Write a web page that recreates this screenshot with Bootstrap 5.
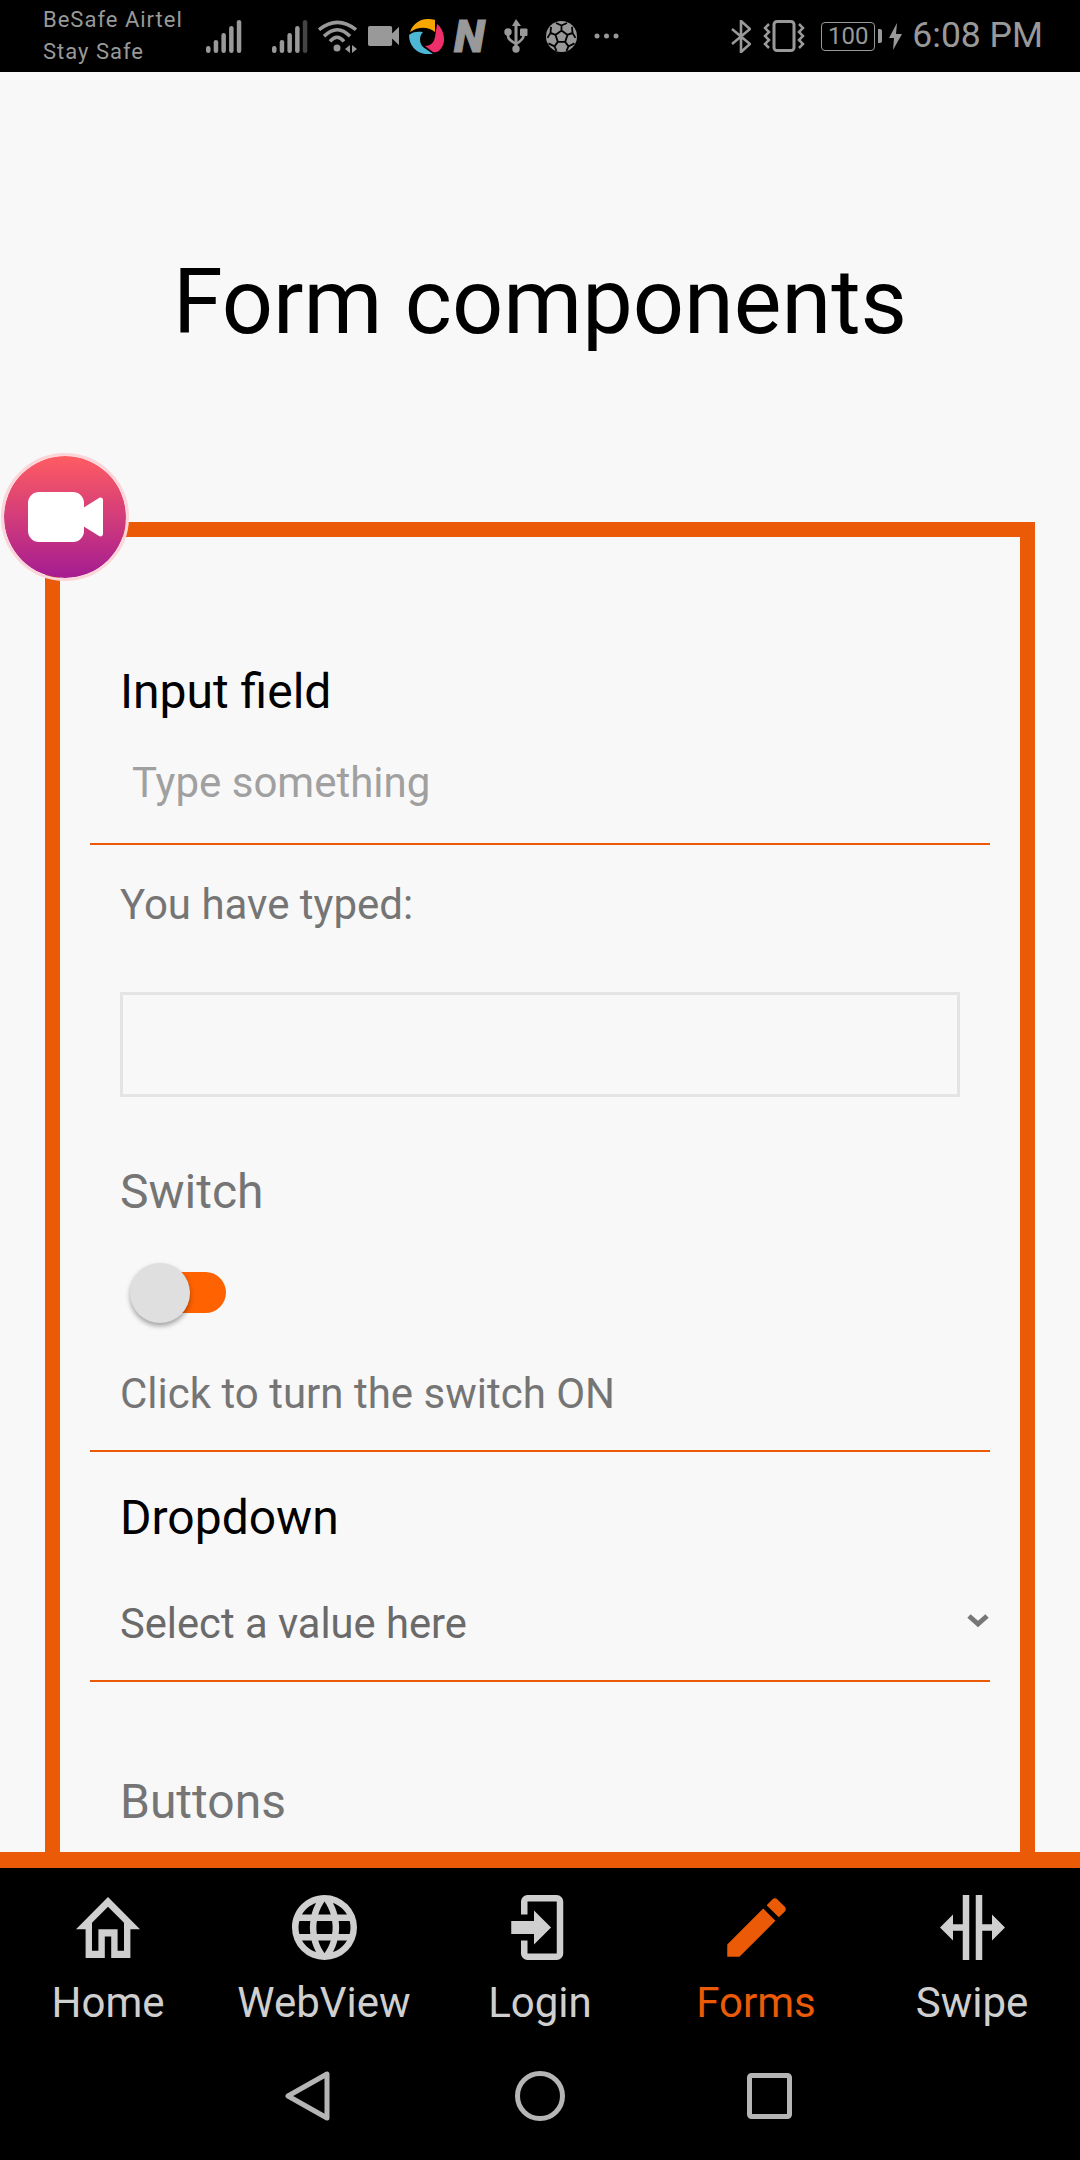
<!DOCTYPE html>
<html lang="en">
<head>
  <meta charset="UTF-8" />
  <meta name="viewport" content="width=device-width, initial-scale=1" />
  <title>Form components</title>
  <link href="https://cdn.jsdelivr.net/npm/bootstrap@5.3.3/dist/css/bootstrap.min.css" rel="stylesheet" />
  <style>
    body {
      background-color: #f8f8f8;
      font-family: Roboto, "Liberation Sans", sans-serif;
    }
    .app-shell {
      height: 2160px;
      overflow: hidden;
    }
    .status-bar {
      height: 72px;
      background: #000;
      color: #999;
      padding-left: 43px;
      padding-right: 37px;
      flex: none;
    }
    .carrier {
      width: 163px;
      font-size: 22px;
      line-height: 32px;
      letter-spacing: 1px;
      margin-top: -1px;
    }
    .status-bar svg { display: block; fill: #999; flex: none; }
    .gap-signal { margin-left: 30px; }
    .gap-wifi { margin-left: 10px; }
    .gap-video { margin-left: 11px; }
    .gap-logo { margin-left: 10px; }
    .gap-usb { margin-left: 14px; }
    .gap-ball { margin-left: 18px; }
    .gap-dots { margin-left: 17px; }
    .gap-vibrate { margin-left: 12px; }
    .gap-bolt { margin-left: 7px; }
    .n-glyph {
      font-size: 45px;
      font-weight: 900;
      font-style: italic;
      line-height: 1;
      width: 36px;
      margin-left: 9px;
      -webkit-text-stroke: 1px #999;
    }
    .batt-box {
      width: 54px;
      height: 29px;
      border: 1.5px solid #999;
      border-radius: 4px;
      font-size: 24px;
      line-height: 26px;
      text-align: center;
    }
    .batt-nub { width: 4px; height: 14px; background: #999; border-radius: 0 2px 2px 0; margin-left: 3px; }
    .clock { font-size: 35.5px; line-height: 1; margin-left: 10px; }

    .main-area {
      flex: 1 1 auto;
      min-height: 0;
      overflow: hidden;
      position: relative;
    }
    .page-title {
      font-family: Roboto, sans-serif;
      font-size: 90px;
      font-weight: 400;
      color: #000;
      text-align: center;
      line-height: 106px;
      padding-top: 178px;
      margin-bottom: 0;
    }
    .frame-box {
      border: 15px solid #eb5a06;
      margin: 166px 45px 0;
      padding: 127px 30px 300px;
    }
    .field-title { font-size: 48px; line-height: 56px; color: #000; padding-left: 30px; margin-bottom: 0; }
    .field-title.muted-title { color: #757575; }
    .under-input.form-control {
      background: transparent;
      border: 0;
      border-bottom: 2px solid #eb5a06;
      border-radius: 0;
      box-shadow: none;
      font-size: 42px;
      line-height: 50px;
      height: 125px;
      padding: 37px 42px 36px;
      color: #757575;
    }
    .under-input.form-control::placeholder { color: #a0a0a0; opacity: 1; }
    .help-text { font-size: 42px; line-height: 48px; color: #757575; padding-left: 30px; margin-bottom: 0; }
    .typed-label { margin-top: 36px; }
    .typed-box {
      height: 105px;
      margin: 63px 30px 0;
      border: 3px solid #e4e4e4;
    }
    .switch-title { margin-top: 67px; }
    .toggle-wrap { width: 100px; height: 60px; margin: 43px 0 47px 40px; }
    .toggle-track {
      position: absolute;
      left: 20px;
      top: 9px;
      width: 76px;
      height: 41px;
      border-radius: 21px;
      background: #ff6200;
    }
    .toggle-knob {
      position: absolute;
      left: 0;
      top: 0;
      width: 60px;
      height: 60px;
      border-radius: 50%;
      background: #dfdfdf;
      box-shadow: 0 3px 5px rgba(0, 0, 0, .35);
    }
    .under-rule { border-bottom: 2px solid #eb5a06; padding-bottom: 32px; }
    .dropdown-title { margin-top: 38px; }
    .under-select.form-select {
      background-color: transparent;
      background-image: url("data:image/svg+xml,%3Csvg xmlns='http://www.w3.org/2000/svg' viewBox='0 0 24 15'%3E%3Cpath d='M3 3l9 8 9-8' fill='none' stroke='%23777' stroke-width='5'/%3E%3C/svg%3E");
      background-size: 24px 15px;
      background-position: right 0 top 67px;
      border: 0;
      border-bottom: 2px solid #eb5a06;
      border-radius: 0;
      box-shadow: none;
      font-size: 41.7px;
      line-height: 50px;
      height: 136px;
      padding: 53px 30px 31px;
      color: #6a6a6a;
    }
    .buttons-title { margin-top: 92px; }
    .rec-button {
      position: absolute;
      left: 1px;
      top: 381px;
      width: 128px;
      height: 128px;
      border-radius: 50%;
      border: 3px solid #fbd5d8;
      background: linear-gradient(#ff5c62, #a51c92);
      background-clip: padding-box;
    }

    .bottom-nav {
      flex: none;
      background: #000;
      border-top: 16px solid #eb5a06;
      height: 308px;
    }
    .tab-row { height: 179px; padding-top: 27px; }
    .tab-item {
      width: 20%;
      color: #cfcfcf;
      font-size: 42px;
      line-height: 49px;
    }
    .tab-item svg { fill: #cfcfcf; display: block; }
    .tab-item.active-tab { color: #eb5a06; }
    .tab-item.active-tab svg { fill: #eb5a06; }
    .tab-icon { height: 65px; margin-bottom: 18px; }
    .sys-row svg { display: block; fill: none; stroke: #b5b5b5; stroke-width: 5; stroke-linejoin: round; }
    .sys-row { padding-top: 24px; }
    .sys-back { margin-left: 285px; }
    .sys-home { margin-left: 185px; }
    .sys-recent { margin-left: 182px; }
  </style>
</head>
<body>

<div class="app-shell d-flex flex-column">

  <!-- status bar -->
  <div class="status-bar d-flex align-items-center">
    <div class="carrier">BeSafe Airtel<br>Stay Safe</div>
    <svg width="36" height="33" viewBox="0 0 36 33"><rect x="0" y="26" width="4.500" height="7" rx="2.250"/><rect x="7.700" y="20" width="4.500" height="13" rx="2.250"/><rect x="15.400" y="13" width="4.500" height="20" rx="2.250"/><rect x="23.100" y="6" width="4.500" height="27" rx="2.250"/><rect x="30.800" y="0" width="4.500" height="33" rx="2.250"/></svg>
    <svg class="gap-signal" width="36" height="33" viewBox="0 0 36 33"><rect x="0" y="26" width="4.500" height="7" rx="2.250"/><rect x="7.700" y="20" width="4.500" height="13" rx="2.250"/><rect x="15.400" y="13" width="4.500" height="20" rx="2.250"/><rect x="23.100" y="6" width="4.500" height="27" rx="2.250"/><rect x="30.800" y="0" width="4.500" height="33" rx="2.250" fill="#444"/></svg>
    <svg class="gap-wifi" width="39" height="33" viewBox="0 0 39 33"><path d="M1 9.700Q19.500-5 38 9.700M6 16.300Q19.500 3 32 16.300M12 21.300Q19 13 26 21.300" fill="none" stroke="#999" stroke-width="3.500"/><circle cx="19" cy="28" r="3.500"/><path d="M32 25v8l-5-4zM34 25v8l5-4z"/></svg>
    <svg class="gap-video" width="31" height="20" viewBox="3 6 18 12" preserveAspectRatio="none"><path d="M17,10.500V7A1,1 0 0,0 16,6H4A1,1 0 0,0 3,7V17A1,1 0 0,0 4,18H16A1,1 0 0,0 17,17V13.500L21,17.500V6.500L17,10.500Z"/></svg>
    <svg class="gap-logo" width="36" height="35" viewBox="0 0 36 35">
      <path d="M1 13C4 4 12 0 18 0c3 0 6 0 8 1v12C18 7 9 8 1 13z" fill="#f7a600"/>
      <path d="M0 16C3 13 8 12 14 13 10 17 10 24 14 28L24 35C12 37 0 30 0 16z" fill="#4db8d6"/>
      <path d="M28 5C35 10 37 22 33 28 30 33 27 34 24 33L16 27C21 27 25 24 26 18z" fill="#ee2f6c"/>
    </svg>
    <div class="n-glyph">N</div>
    <svg class="gap-usb" width="24" height="34" viewBox="0 0 24 34"><path d="M12 0l5 7h-9z"/><rect x="10.500" y="5" width="3" height="24"/><circle cx="12" cy="30" r="3.700"/><circle cx="4" cy="13" r="3.700"/><rect x="16" y="9.500" width="7.500" height="7.500" rx="1"/><path d="M4 14v3c0 3 3 5 8 8 5-3 7.500-5 7.500-8v-3" fill="none" stroke="#999" stroke-width="2.600"/></svg>
    <svg class="gap-ball" width="31" height="31" viewBox="0 0 31 31"><circle cx="15.500" cy="15.500" r="15.500"/><path d="M15.500 9.500l6 4.400-2.300 7h-7.400l-2.300-7zM15.500 9.500V4.500M21.500 13.900l5-2M19.200 20.900l3.300 4.500M11.800 20.900l-3.300 4.500M9.500 13.900l-5-2M15.500 4.500L10 2M15.500 4.500L21 2M26.500 11.900l-.5-6M26.500 11.900l3 5M22.500 25.400l6-3M22.500 25.400l-2 4.500M8.500 25.400l-6-3M8.500 25.400l2 4.500M4.500 11.900l.5-6M4.500 11.900l-3 5" fill="none" stroke="#000" stroke-width="1.800"/></svg>
    <svg class="gap-dots" width="25" height="6" viewBox="0 0 25 6"><circle cx="3" cy="3" r="2.500"/><circle cx="12.500" cy="3" r="2.500"/><circle cx="22" cy="3" r="2.500"/></svg>

    <div class="ms-auto d-flex align-items-center">
      <svg width="20" height="33" viewBox="0 0 20 33"><path d="M1 9l18 15-9 8V1l9 8L1 24" fill="none" stroke="#999" stroke-width="2.600"/></svg>
      <svg class="gap-vibrate" width="42" height="32" viewBox="0 0 42 32"><rect x="11" y="1.500" width="20" height="29" rx="3" fill="none" stroke="#999" stroke-width="3"/><path d="M6 4L2 8l4 4-4 4 4 4-4 4 4 4M36 4l4 4-4 4 4 4-4 4 4 4-4 4" fill="none" stroke="#999" stroke-width="2.500"/></svg>
      <div class="batt-box ms-3">100</div>
      <div class="batt-nub"></div>
      <svg class="gap-bolt" width="13" height="27" viewBox="0 0 13 27"><path d="M8 0L0 15h5L4 27l9-16H7z"/></svg>
      <div class="clock">6:08 PM</div>
    </div>
  </div>

  <!-- page content -->
  <div class="main-area">
    <h1 class="page-title">Form components</h1>
    <div class="frame-box">
      <p class="field-title">Input field</p>
      <input type="text" class="form-control under-input" placeholder="Type something" />
      <p class="help-text typed-label">You have typed:</p>
      <div class="typed-box"></div>

      <p class="field-title muted-title switch-title">Switch</p>
      <div class="toggle-wrap position-relative">
        <div class="toggle-track"></div>
        <div class="toggle-knob"></div>
      </div>
      <div class="under-rule">
        <p class="help-text">Click to turn the switch ON</p>
      </div>

      <p class="field-title dropdown-title">Dropdown</p>
      <select class="form-select under-select">
        <option>Select a value here</option>
      </select>

      <p class="field-title muted-title buttons-title">Buttons</p>
    </div>
    <div class="rec-button d-flex align-items-center justify-content-center">
      <svg width="75" height="50" viewBox="0 0 75 50"><rect x="0" y="0" width="56" height="50" rx="11" fill="#fff"/><path d="M55 16L71 6c2-1 4 0 4 2v34c0 2-2 3-4 2L55 34z" fill="#fff"/></svg>
    </div>
  </div>

  <!-- bottom tabs -->
  <div class="bottom-nav">
    <div class="tab-row d-flex">
      <div class="tab-item text-center">
        <div class="tab-icon d-flex justify-content-center align-items-center"><svg width="64" height="61" viewBox="2 3 20 17" preserveAspectRatio="none"><path d="M12 5.690l5 4.500V18h-2v-6H9v6H7v-7.810l5-4.500M12 3L2 12h3v8h6v-6h2v6h6v-8h3L12 3z"/></svg></div>
        Home
      </div>
      <div class="tab-item text-center">
        <div class="tab-icon d-flex justify-content-center"><svg width="65" height="65" viewBox="2 2 20 20"><path d="M16.36,14C16.44,13.34 16.5,12.68 16.5,12C16.5,11.32 16.44,10.66 16.36,10H19.74C19.9,10.64 20,11.31 20,12C20,12.69 19.9,13.36 19.74,14M14.59,19.56C15.19,18.45 15.65,17.25 15.97,16H18.92C17.96,17.65 16.43,18.93 14.59,19.56M14.34,14H9.66C9.56,13.34 9.5,12.68 9.5,12C9.5,11.32 9.56,10.65 9.66,10H14.34C14.43,10.65 14.5,11.32 14.5,12C14.5,12.68 14.43,13.34 14.34,14M12,19.96C11.17,18.76 10.5,17.43 10.09,16H13.91C13.5,17.43 12.83,18.76 12,19.96M8,8H5.08C6.03,6.34 7.57,5.06 9.4,4.44C8.8,5.55 8.35,6.75 8,8M5.08,16H8C8.35,17.25 8.8,18.45 9.4,19.56C7.57,18.93 6.03,17.65 5.08,16M4.26,14C4.1,13.36 4,12.69 4,12C4,11.31 4.1,10.64 4.26,10H7.64C7.56,10.66 7.5,11.32 7.5,12C7.5,12.68 7.56,13.34 7.64,14M12,4.03C12.83,5.23 13.5,6.57 13.91,8H10.09C10.5,6.57 11.17,5.23 12,4.03M18.92,8H15.97C15.65,6.75 15.19,5.55 14.59,4.44C16.43,5.07 17.96,6.34 18.92,8M12,2C6.47,2 2,6.5 2,12A10,10 0 0,0 12,22A10,10 0 0,0 22,12A10,10 0 0,0 12,2Z"/></svg></div>
        WebView
      </div>
      <div class="tab-item text-center">
        <div class="tab-icon d-flex justify-content-center"><svg width="65" height="65" viewBox="2 2 20 20"><path d="M10,17.25V14H3V10H10V6.75L15.25,12L10,17.25M8,2H17A2,2 0 0,1 19,4V20A2,2 0 0,1 17,22H8A2,2 0 0,1 6,20V16H8V20H17V4H8V8H6V4A2,2 0 0,1 8,2Z"/></svg></div>
        Login
      </div>
      <div class="tab-item text-center active-tab">
        <div class="tab-icon d-flex justify-content-center"><svg width="65" height="65" viewBox="2 2 20 20"><path d="M20.71,7.04C21.1,6.65 21.1,6 20.71,5.63L18.37,3.29C18,2.9 17.35,2.9 16.96,3.29L15.12,5.12L18.87,8.87M3,17.25V21H6.75L17.81,9.93L14.06,6.18L3,17.25Z"/></svg></div>
        Forms
      </div>
      <div class="tab-item text-center">
        <div class="tab-icon d-flex justify-content-center"><svg width="65" height="65" viewBox="2 2 20 20"><path d="M18,16V13H15V22H13V2H15V11H18V8L22,12L18,16M2,12L6,16V13H9V22H11V2H9V11H6V8L2,12Z"/></svg></div>
        Swipe
      </div>
    </div>
    <div class="sys-row d-flex align-items-center">
      <svg class="sys-back" width="45" height="50" viewBox="0 0 45 50"><path d="M42 3v44L3 25z"/></svg>
      <svg class="sys-home" width="50" height="50" viewBox="0 0 50 50"><circle cx="25" cy="25" r="22.500"/></svg>
      <svg class="sys-recent" width="45" height="46" viewBox="0 0 45 46"><rect x="2.500" y="2.500" width="40" height="41" rx="2"/></svg>
    </div>
  </div>

</div>

<script src="https://cdn.jsdelivr.net/npm/bootstrap@5.3.3/dist/js/bootstrap.bundle.min.js"></script>
</body>
</html>
